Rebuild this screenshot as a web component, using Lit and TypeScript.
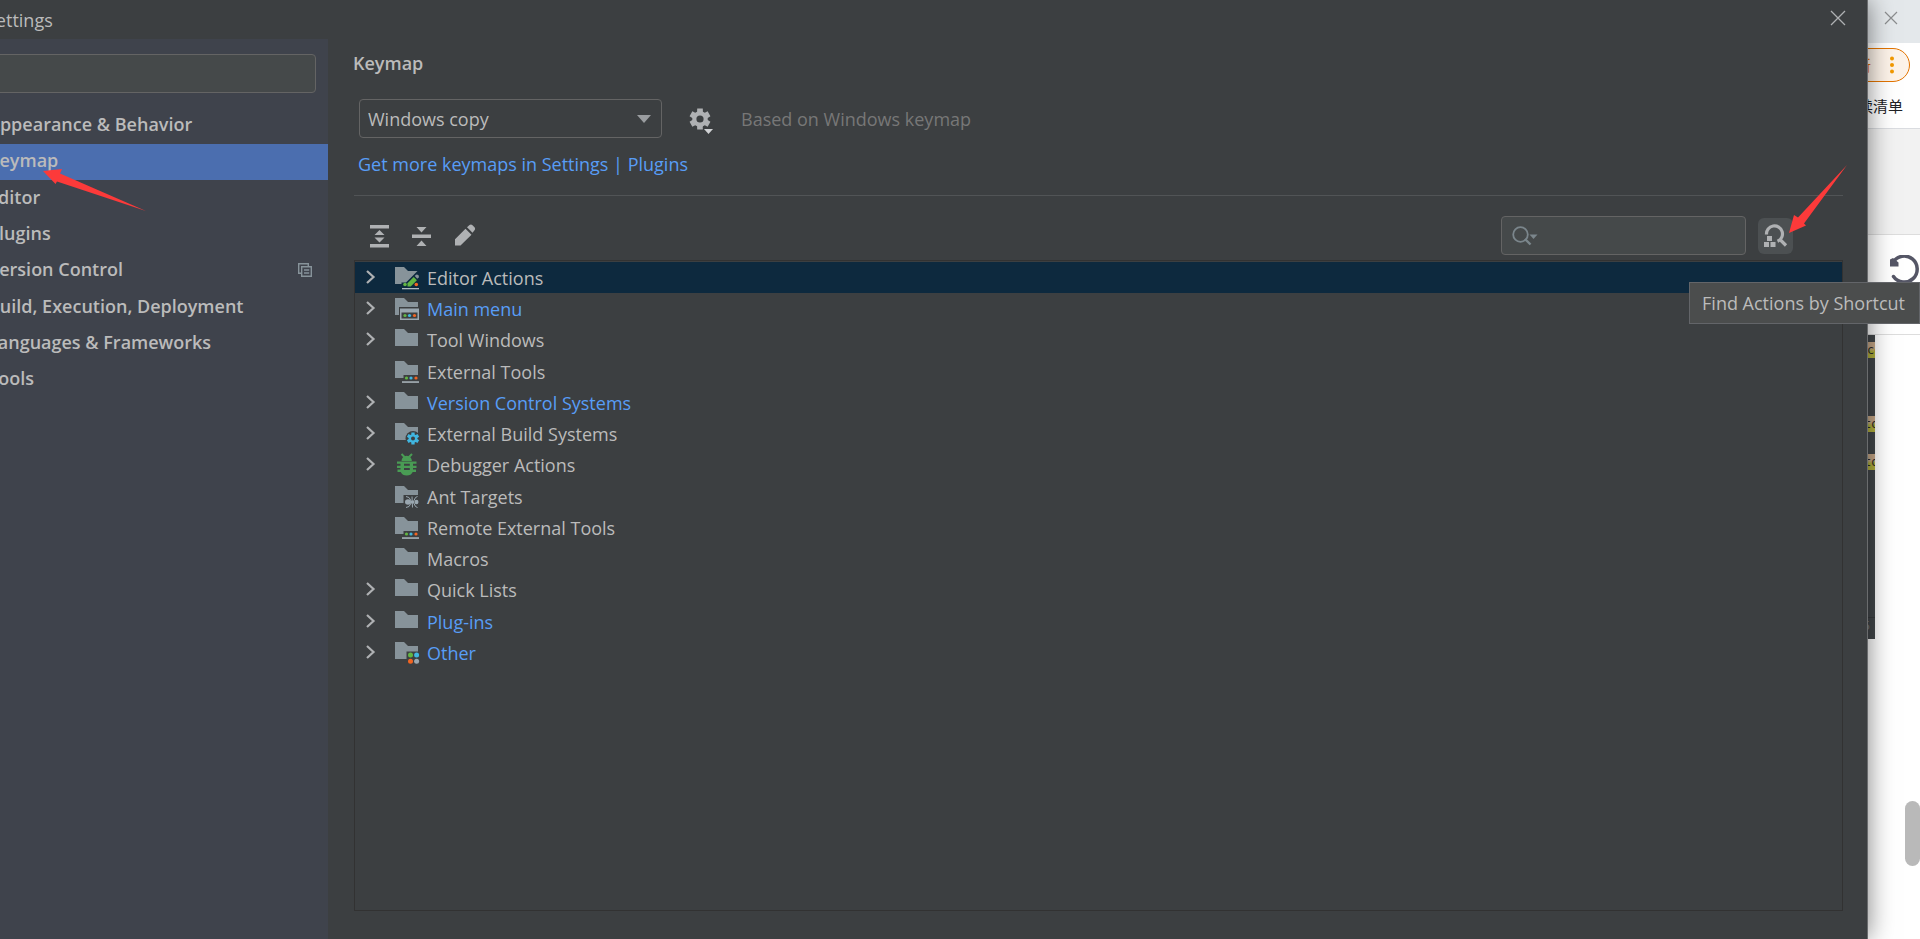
import { LitElement, html, css, svg, nothing } from "lit";
import { customElement, state } from "lit/decorators.js";
import { classMap } from "lit/directives/class-map.js";

type FolderBadge = "edit" | "menu" | "tools" | "gear" | "ant" | "other" | "none";

interface TreeItem {
  label: string;
  icon: FolderBadge | "bug";
  expandable: boolean;
  changed?: boolean;
}

const CATEGORIES = [
  "Appearance & Behavior",
  "Keymap",
  "Editor",
  "Plugins",
  "Version Control",
  "Build, Execution, Deployment",
  "Languages & Frameworks",
  "Tools",
];

const TREE: TreeItem[] = [
  { label: "Editor Actions", icon: "edit", expandable: true },
  { label: "Main menu", icon: "menu", expandable: true, changed: true },
  { label: "Tool Windows", icon: "none", expandable: true },
  { label: "External Tools", icon: "tools", expandable: false },
  { label: "Version Control Systems", icon: "none", expandable: true, changed: true },
  { label: "External Build Systems", icon: "gear", expandable: true },
  { label: "Debugger Actions", icon: "bug", expandable: true },
  { label: "Ant Targets", icon: "ant", expandable: false },
  { label: "Remote External Tools", icon: "tools", expandable: false },
  { label: "Macros", icon: "none", expandable: false },
  { label: "Quick Lists", icon: "none", expandable: true },
  { label: "Plug-ins", icon: "none", expandable: true, changed: true },
  { label: "Other", icon: "other", expandable: true, changed: true },
];

const FOLDER = "M0 1h9l4 4h10v13H0z";

/* Six-toothed gear whose hub stays transparent. */
const gearOutline = (cx: number, cy: number, outer: number, inner: number, hole: number) => {
  const pts: string[] = [];
  for (let i = 0; i < 6; i++) {
    const base = (i * 60 - 90) * (Math.PI / 180);
    const at = (r: number, deg: number) => {
      const a = base + (deg * Math.PI) / 180;
      return `${(cx + r * Math.cos(a)).toFixed(2)} ${(cy + r * Math.sin(a)).toFixed(2)}`;
    };
    pts.push(at(inner, -22), at(outer, -15), at(outer, 15), at(inner, 22));
  }
  return `M${pts.join("L")}Z M${cx - hole} ${cy}a${hole} ${hole} 0 1 0 ${hole * 2} 0a${hole} ${hole} 0 1 0 ${-hole * 2} 0Z`;
};

const badge = (kind: FolderBadge) => {
  switch (kind) {
    case "edit":
      return svg`
        <path d="M0 1h9l4 4h9.500L12.500 15 11 16.500H6.500V18H0z" fill="#87939a"/>
        <circle cx="10" cy="18.500" r="1.800" fill="#62b543"/>
        <path d="M12.500 20.500v-3.300l6.200-6.200 3.200 3.200-6.200 6.300z" fill="#62b543"/>
        <path d="M19.700 10l1.300-1.300q1-.7 2.200.4t.5 2.200L22.400 12.700z" fill="#87939a"/>
        <circle cx="21.300" cy="18.500" r="1.800" fill="#f26522"/>
        <path d="M7 22h17v1.300H7z" fill="#aeb9c0"/>`;
    case "menu":
      return svg`
        <path d="${FOLDER}" fill="#87939a"/>
        <path d="M4 10h20v14H4z" class="cut"/>
        <path d="M5 11.500h19V23H5zM6.500 15.500v6h16v-6z" fill="#9aa7b0" fill-rule="evenodd"/>
        <circle cx="10" cy="18.500" r="1.600" fill="#62b543"/>
        <circle cx="14.500" cy="18.500" r="1.600" fill="#40b6e0"/>
        <circle cx="19.500" cy="18.500" r="1.600" fill="#f26522"/>`;
    case "tools":
      return svg`
        <path d="${FOLDER}" fill="#87939a"/>
        <path d="M8.500 15h15v6h-15z" class="cut"/>
        <circle cx="11.500" cy="18" r="1.600" fill="#62b543"/>
        <circle cx="16" cy="18" r="1.600" fill="#40b6e0"/>
        <circle cx="21" cy="18" r="1.600" fill="#f26522"/>
        <path d="M7 21.300h17v1.500H7z" fill="#aeb9c0"/>`;
    case "gear":
      return svg`
        <path d="${FOLDER}" fill="#87939a"/>
        <circle cx="18" cy="16.500" r="7.500" class="cut"/>
        <path d="${gearOutline(18, 16.5, 6.3, 4.4, 2)}" fill="#40b6e0" fill-rule="evenodd"/>`;
    case "ant":
      return svg`
        <path d="${FOLDER}" fill="#87939a"/>
        <path d="M8.500 10h15v10h-15z" class="cut"/>
        <ellipse cx="13" cy="17" rx="3" ry="2.700" fill="#9aa7b0"/>
        <ellipse cx="17.500" cy="17" rx="2" ry="1.600" fill="#9aa7b0"/>
        <ellipse cx="21.500" cy="17" rx="2" ry="2.200" fill="#9aa7b0"/>
        <path d="M11 11.500l3 1 2.500 4M11 22.500l3-1 2.500-4M17 11.500l.5 11M22.500 11.500l-2 1-2 4M22.500 22.500l-2-1-2-4" stroke="#9aa7b0" fill="none"/>`;
    case "other":
      return svg`
        <path d="${FOLDER}" fill="#87939a"/>
        <path d="M11.500 10.500h12.500v12h-12.500z" class="cut"/>
        <circle cx="15.500" cy="14" r="2.500" fill="#62b543"/>
        <circle cx="21.600" cy="14" r="2.500" fill="#40b6e0"/>
        <circle cx="15.500" cy="20.200" r="2.500" fill="#f26522"/>
        <circle cx="21.600" cy="20.200" r="2.500" fill="#9aa7b0"/>`;
    default:
      return svg`<path d="${FOLDER}" fill="#87939a"/>`;
  }
};

const bugIcon = svg`
  <path d="M6.500 1l3.500 3.500M17 1l-3.500 3.500" stroke="#499c54" stroke-width="2" fill="none"/>
  <path d="M6.500 8a5.200 5.200 0 0 1 10.400 0z" fill="#499c54"/>
  <path d="M2 8.500h19.500v2.300H18v2h3.500v2.300H18v1.500h3v2.300h-3.300q-1.600 3.500-6 3.500t-6-3.500H2.500v-2.300h3v-1.500H2v-2.300h3.500v-2H2z" fill="#499c54"/>
  <path d="M9 10.800h5.800v2H9zM9 15h5.800v2H9z" class="cut"/>`;

const closeIcon = html`<svg width="16" height="16" viewBox="0 0 16 16" aria-hidden="true">
  <path d="M1 1l14 14M15 1L1 15" stroke="currentColor" stroke-width="1.300" fill="none"/>
</svg>`;

@customElement("app-root")
export class AppRoot extends LitElement {
  @state() private category = "Keymap";
  @state() private selected = "Editor Actions";

  static styles = css`
    :host {
      display: block;
      height: 100vh;
      overflow: hidden;
      position: relative;
      background: #fff;
      color: #bbbbbb;
      font: 18px/24px "Open Sans", "Noto Sans", "Noto Sans CJK SC", sans-serif;
    }
    * { box-sizing: border-box; }
    svg { display: block; flex: none; }
    button {
      display: flex;
      align-items: center;
      justify-content: center;
      padding: 0;
      border: 0;
      background: none;
      color: #afb1b3;
    }
    input, select, button { font: inherit; outline: none; }
    ul { list-style: none; margin: 0; padding: 0; }
    .screen { display: grid; grid-template-columns: minmax(0, 1fr) 52px; height: 100%; }

    /* settings window */
    .dialog {
      position: relative;
      z-index: 1;
      display: grid;
      grid-template-columns: 328px minmax(0, 1fr);
      grid-template-rows: 39px minmax(0, 1fr);
      background: #3c3f41;
      border-right: 1px solid #6a6c6e;
      box-shadow: 0 0 24px rgba(0, 0, 0, 0.5);
    }
    .titlebar {
      grid-column: 1 / -1;
      display: flex;
      align-items: center;
      justify-content: space-between;
      padding: 0 21px 0 0;
    }
    .titlebar button { padding-bottom: 4px; }
    .title { margin-left: -14px; }
    .side { background: #3f434c; padding-top: 15px; min-width: 0; overflow: hidden; }
    .field {
      display: flex;
      align-items: center;
      height: 39px;
      border: 1px solid #646464;
      border-radius: 4px;
      background: #45494a;
      color: #7b868c;
    }
    .field input {
      flex: 1;
      min-width: 0;
      border: 0;
      background: none;
      color: #bbbbbb;
    }
    .side .field { margin: 0 12px 0 -10px; }
    .categories { margin-top: 15px; }
    .category {
      width: 100%;
      height: 36px;
      padding: 0 16px 0 0;
      justify-content: space-between;
      color: #bbbbbb;
      font-weight: 600;
      white-space: nowrap;
    }
    .categories li:nth-child(3n) { padding-top: 1px; }
    .category.active { background: #4b6eaf; }
    .category svg { margin-bottom: 2px; }
    .name { margin-left: -12px; padding-bottom: 4px; }

    .main {
      display: flex;
      flex-direction: column;
      min-width: 0;
      padding: 12px 24px 28px 25px;
    }
    h1 { margin: 0; font-size: 18px; line-height: 24px; font-weight: 600; }
    .scheme { display: flex; align-items: center; margin: 24px 0 0 6px; }
    .combo { position: relative; width: 303px; }
    .combo select {
      display: block;
      width: 100%;
      height: 39px;
      padding: 0 32px 0 8px;
      appearance: none;
      border: 1px solid #646464;
      border-radius: 4px;
      background: #3c3f41;
      color: #bbbbbb;
    }
    .combo svg { position: absolute; right: 11px; top: 16px; pointer-events: none; }
    .gear { margin-left: 27px; padding-top: 2px; }
    .based { margin-left: 26px; color: #777777; }
    .more { align-self: flex-start; margin: 14px 0 0 5px; color: #589df6; text-decoration: none; }
    .rule { align-self: stretch; height: 1px; margin: 19px 0 20px 1px; border: 0; background: #515456; flex: none; }
    .tools { display: flex; align-items: center; padding: 0 50px 0 13px; height: 39px; flex: none; }
    .edit-group { display: flex; gap: 18px; }
    .search { width: 245px; margin-left: auto; padding-left: 10px; }
    .find { width: 35px; height: 36px; margin-left: 12px; border-radius: 6px; background: #4c5052; }

    .tree { flex: 1; min-height: 0; margin: 5px 0 0 1px; border: 1px solid #323232; padding-top: 1px; }
    .row {
      --surface: #3c3f41;
      display: flex;
      align-items: center;
      height: 31px;
      padding-left: 11px;
      color: #bbbbbb;
    }
    .row:nth-child(4n) { height: 32px; padding-top: 1px; }
    .row.active { --surface: #0d293e; background: #0d293e; }
    .row.changed { color: #589df6; }
    .chevron { width: 10px; margin-right: 19px; padding-bottom: 1px; }
    .kind { margin-right: 7px; }
    .row .label { padding-top: 1px; }
    .cut { fill: var(--surface); }

    .tip {
      position: absolute;
      z-index: 3;
      right: 0;
      top: 282px;
      padding: 8px 14px 8px 12px;
      border: 1px solid #636569;
      background: #4b4d4d;
    }
    .mark { position: absolute; z-index: 2; fill: #fc3a3a; }
    .mark-left { left: 43px; top: 168px; }
    .mark-right { right: 72px; top: 165px; }

    /* browser strip behind the window */
    .browser { display: flex; flex-direction: column; min-width: 0; background: #fff; overflow: hidden; position: relative; }
    .tabs { height: 43px; flex: none; padding: 10px 0 0 15px; background: #e4e8eb; }
    .tabs button { color: #8b8d8f; }
    .address { flex: none; height: 44px; padding-top: 5px; }
    .update {
      width: 92px;
      height: 34px;
      margin-left: -50px;
      padding: 0 15px 0 0;
      justify-content: flex-end;
      gap: 19px;
      border: 1px solid #e37400;
      border-radius: 17px;
      background: #fdf3e9;
      color: #e37400;
      font: 15px/20px "Noto Sans CJK SC", sans-serif;
    }
    .bookmarks {
      flex: none;
      display: flex;
      justify-content: flex-end;
      height: 42px;
      padding: 8px 17px 0 0;
      border-bottom: 1px solid #dadce0;
      color: #202124;
      font: 15px/22px "Noto Sans CJK SC", sans-serif;
      white-space: nowrap;
    }
    .band { flex: none; height: 106px; background: #f2f2f2; border-bottom: 1px solid #dddddd; }
    .page-bar { flex: none; height: 100px; padding: 20px 0 0 21px; border-bottom: 1px solid #dddddd; }
    .shot {
      flex: none;
      width: 7px;
      height: 304px;
      display: flex;
      flex-direction: column;
      overflow: hidden;
      background: #43474a;
      font: 12px/16px "DejaVu Sans Mono", monospace;
      color: #2b2b2b;
    }
    .chip { flex: none; height: 16px; overflow: hidden; background: linear-gradient(#c8a988 40%, #b4b23e 60%); text-indent: -4px; }
    .chip-1 { margin-top: 7px; text-indent: -1px; }
    .chip-2 { margin-top: 58px; }
    .chip-3 { margin-top: 22px; }
    .status { margin-top: auto; height: 22px; border-top: 1px solid #383b3d; color: #77797b; text-indent: -5px; }
    .thumb { position: absolute; right: 0; top: 801px; width: 15px; height: 65px; border-radius: 8px; background: #b9b9b9; }
  `;

  private renderRow(item: TreeItem) {
    return html`<li
      role="treeitem"
      aria-selected=${item.label === this.selected ? "true" : "false"}
      class=${classMap({ row: true, active: item.label === this.selected, changed: !!item.changed })}
      @click=${() => (this.selected = item.label)}
    >
      <span class="chevron">${item.expandable
        ? html`<svg width="10" height="14" viewBox="0 0 10 14" aria-hidden="true">
            <path d="M1 1l6.500 6L1 13" stroke="#afb1b3" stroke-width="2.200" fill="none"/>
          </svg>`
        : nothing}</span>
      <svg class="kind" width="25" height="24" viewBox="0 0 25 24" aria-hidden="true">
        ${item.icon === "bug" ? bugIcon : badge(item.icon)}
      </svg>
      <span class="label">${item.label}</span>
    </li>`;
  }

  render() {
    return html`
      <div class="screen">
        <section class="dialog">
          <header class="titlebar">
            <span class="title">Settings</span>
            <button aria-label="Close">${closeIcon}</button>
          </header>
          <nav class="side">
            <div class="field"><input aria-label="Search settings" /></div>
            <ul class="categories">
              ${CATEGORIES.map(
                (c) => html`<li>
                  <button class=${classMap({ category: true, active: c === this.category })} @click=${() => (this.category = c)}>
                    <span class="name">${c}</span>
                    ${c === "Version Control"
                      ? html`<svg width="14" height="14" viewBox="0 0 14 14" aria-hidden="true">
                          <path d="M3 10.300H.7V.7h9.600V3" fill="none" stroke="#87939a" stroke-width="1.400"/>
                          <path d="M3.700 3.700h9.600v9.600H3.700zM6 7h5.200M6 10h5.200" fill="none" stroke="#87939a" stroke-width="1.400"/>
                        </svg>`
                      : nothing}
                  </button>
                </li>`
              )}
            </ul>
          </nav>
          <main class="main">
            <h1>Keymap</h1>
            <div class="scheme">
              <div class="combo">
                <select aria-label="Keymap scheme"><option>Windows copy</option></select>
                <svg width="14" height="8" viewBox="0 0 14 8" aria-hidden="true"><path d="M0 0h14L7 8z" fill="#9a9da0"/></svg>
              </div>
              <button class="gear" aria-label="Scheme actions">
                <svg width="26" height="28" viewBox="0 0 26 28" aria-hidden="true">
                  <path d="${gearOutline(11, 13, 10.8, 7.8, 3.6)}" fill="#afb1b3" fill-rule="evenodd"/>
                  <path d="M13.500 21.500h12L19.500 28z" fill="#3c3f41"/>
                  <path d="M15 23h9l-4.500 5z" fill="#d0d2d4"/>
                </svg>
              </button>
              <span class="based">Based on Windows keymap</span>
            </div>
            <a class="more" href="#plugins">Get more keymaps in Settings | Plugins</a>
            <hr class="rule" />
            <div class="tools">
              <div class="edit-group">
                <button aria-label="Expand all">
                  <svg width="24" height="24" viewBox="0 0 24 24" aria-hidden="true">
                    <path d="M4 1h19v3.500H4zM4 20h19v3.500H4zM13.500 6l5 5h-10zM13.500 18.500l5-5h-10z" fill="currentColor"/>
                  </svg>
                </button>
                <button aria-label="Collapse all">
                  <svg width="24" height="24" viewBox="0 0 24 24" aria-hidden="true">
                    <path d="M4 10.500h19v3.500H4zM13.500 8.500l5-5.500h-10zM13.500 16.500l5 5.500h-10z" fill="currentColor"/>
                  </svg>
                </button>
                <button aria-label="Edit shortcut">
                  <svg width="26" height="24" viewBox="0 0 26 24" aria-hidden="true">
                    <path d="M5 21.500v-6.300L15.500 4.700l6 6L10.500 21.500zM17 3.200L19.500 1q1.500-1.200 3 .2l2 2q1.200 1.500 0 3L22.500 8.700z" fill="currentColor"/>
                  </svg>
                </button>
              </div>
              <div class="field search">
                <svg width="26" height="20" viewBox="0 0 26 20" aria-hidden="true">
                  <circle cx="8.500" cy="8.500" r="7.300" fill="none" stroke="#7b868c" stroke-width="1.800"/>
                  <path d="M13 13l5.500 5.500" stroke="#7b868c" stroke-width="2.400"/>
                  <path d="M17.500 8.500h8l-4 4.500z" fill="#7b868c"/>
                </svg>
                <input aria-label="Search actions" />
              </div>
              <button class="find" aria-label="Find Actions by Shortcut">
                <svg width="25" height="24" viewBox="0 0 25 24" aria-hidden="true">
                  <path d="M3.500 10.500A8 8 0 1 1 14.500 17.300M16.500 15l6.500 6.500" fill="none" stroke="currentColor" stroke-width="3.200"/>
                  <path d="M4 12h5v5H4zM1 18h5v5H1zM7.500 18h5v5h-5z" fill="currentColor"/>
                </svg>
              </button>
            </div>
            <ul class="tree" role="tree" aria-label="Actions">${TREE.map((i) => this.renderRow(i))}</ul>
          </main>
        </section>

        <aside class="browser">
          <div class="tabs"><button aria-label="Close tab"><svg width="16" height="16" viewBox="0 0 16 16" aria-hidden="true">
            <path d="M2 2l12 12M14 2L2 14" stroke="currentColor" stroke-width="1.200" fill="none"/></svg></button></div>
          <div class="address">
            <button class="update">更新
              <svg width="4" height="18" viewBox="0 0 4 18" aria-hidden="true" fill="#f29900">
                <circle cx="2" cy="2.500" r="2"/><circle cx="2" cy="9" r="2"/><circle cx="2" cy="15.500" r="2"/>
              </svg>
            </button>
          </div>
          <div class="bookmarks"><span>阅读清单</span></div>
          <div class="band"></div>
          <div class="page-bar">
            <svg width="31" height="30" viewBox="0 0 31 30" aria-hidden="true">
              <path d="M4 7.500A13 13 0 1 1 4.500 21.500" fill="none" stroke="#555666" stroke-width="3.500" stroke-linecap="round"/>
              <path d="M1 4.500l3-1.500 5.500 4.500v4H1z" fill="#555666"/>
            </svg>
          </div>
          <div class="shot">
            <div class="chip chip-1">co</div>
            <div class="chip chip-2">to</div>
            <div class="chip chip-3">to</div>
            <div class="status">5</div>
          </div>
          <div class="thumb"></div>
        </aside>
      </div>

      <div class="tip" role="tooltip">Find Actions by Shortcut</div>
      <svg class="mark mark-left" width="104" height="44" viewBox="0 0 104 44" aria-hidden="true">
        <path d="M0 3L19 1l-2 4.500L103 43 14 13.500 12.500 16z"/>
      </svg>
      <svg class="mark mark-right" width="59" height="69" viewBox="0 0 59 69" aria-hidden="true">
        <path d="M0 68L5 50l4 2.500L58 0 15 58.500l2 2z"/>
      </svg>
    `;
  }
}
